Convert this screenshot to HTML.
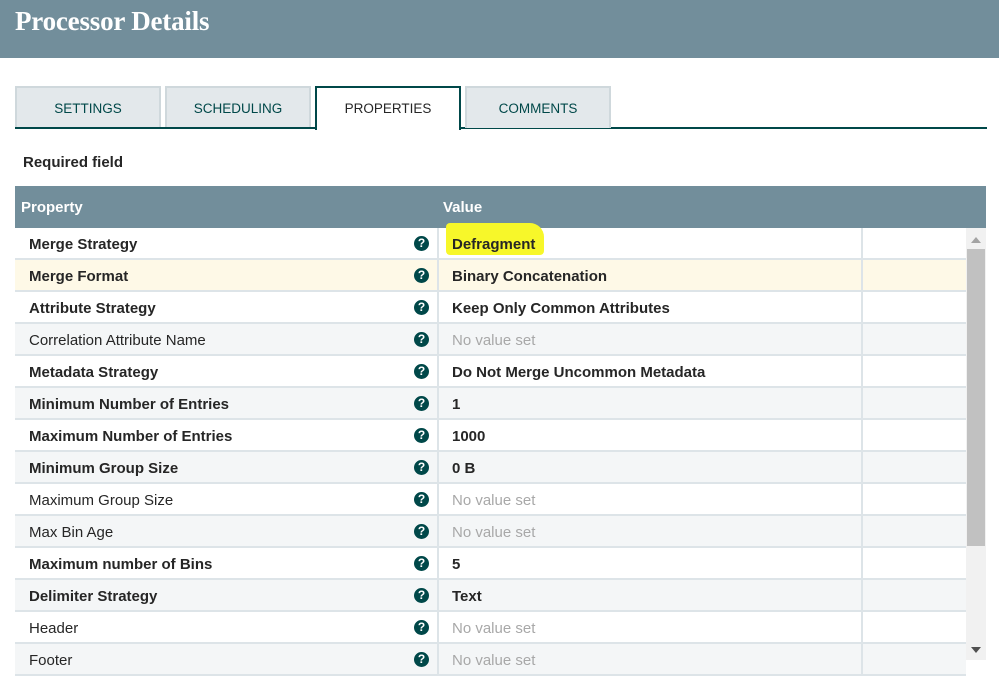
<!DOCTYPE html>
<html><head><style>
*{margin:0;padding:0;box-sizing:border-box}
body{width:999px;height:660px;overflow:hidden;background:#fff;font-family:"Liberation Sans",sans-serif;position:relative}
.hdr{position:absolute;left:0;top:0;width:999px;height:58px;background:#728e9b}
.hdr h1{position:absolute;left:15px;top:6px;color:#fff;font-family:"Liberation Serif",serif;font-size:27px;font-weight:bold;letter-spacing:-0.2px}
.tab{position:absolute;top:86px;height:42px;width:146px;background:#e3e8eb;border:2px solid #cfd8dc;border-bottom:none;color:#004849;font-size:13.5px;text-align:center;line-height:42px}
.tab.act{background:#fff;border:2px solid #004849;border-bottom:none;color:#262626;height:44px}
.line{position:absolute;left:15px;top:127px;width:972px;height:2px;background:#004849}
.req{position:absolute;left:23px;top:154px;font-size:15px;font-weight:bold;color:#262626}
.th{position:absolute;left:15px;top:186px;width:971px;height:42px;background:#728e9b;color:#fff;font-weight:bold;font-size:15px}
.th span{position:absolute;top:13px}
.rows{position:absolute;left:15px;top:228px;width:951px}
.r{height:32px;border-bottom:2px solid #dde4e8;position:relative;font-size:15px;color:#262626}
.r.g{background:#f4f6f7}.r.y{background:#fef9e7}
.r .n{position:absolute;left:14px;top:8px}
.r .b{font-weight:bold}
.r .v{position:absolute;left:437px;top:8px;font-weight:bold}
.r .v.e{font-weight:normal;color:#a8a8a8}
.r .q{position:absolute;left:399px;top:8px;width:15px;height:15px;border-radius:50%;background:#004849;color:#fff;font-size:12px;font-weight:bold;text-align:center;line-height:15px}
.r:before{content:"";position:absolute;left:422px;top:0;width:2px;height:32px;background:#dde4e8}
.r:after{content:"";position:absolute;left:846px;top:0;width:2px;height:32px;background:#dde4e8}
.sb{position:absolute;left:966px;top:228px;width:20px;height:432px;background:#f1f1f1}
.th2{position:absolute;left:967px;top:249px;width:18px;height:297px;background:#c1c1c1}
.hl{position:absolute;width:98px;height:32px;background:#f7f72a;border-radius:4px 14px 4px 4px}
</style></head><body>
<div class="hdr"><h1>Processor Details</h1></div>
<div class="tab" style="left:15px">SETTINGS</div>
<div class="tab" style="left:165px">SCHEDULING</div>
<div class="line"></div>
<div class="tab act" style="left:315px">PROPERTIES</div>
<div class="tab" style="left:465px">COMMENTS</div>
<div class="req">Required field</div>
<div class="th"><span style="left:6px">Property</span><span style="left:428px">Value</span></div>
<div class="rows">
<div class="r"><div class="hl" style="left:431px;top:-5px"></div><span class="n b">Merge Strategy</span><span class="q">?</span><span class="v" style="position:absolute">Defragment</span></div>
<div class="r y"><span class="n b">Merge Format</span><span class="q">?</span><span class="v">Binary Concatenation</span></div>
<div class="r"><span class="n b">Attribute Strategy</span><span class="q">?</span><span class="v">Keep Only Common Attributes</span></div>
<div class="r g"><span class="n">Correlation Attribute Name</span><span class="q">?</span><span class="v e">No value set</span></div>
<div class="r"><span class="n b">Metadata Strategy</span><span class="q">?</span><span class="v">Do Not Merge Uncommon Metadata</span></div>
<div class="r g"><span class="n b">Minimum Number of Entries</span><span class="q">?</span><span class="v">1</span></div>
<div class="r"><span class="n b">Maximum Number of Entries</span><span class="q">?</span><span class="v">1000</span></div>
<div class="r g"><span class="n b">Minimum Group Size</span><span class="q">?</span><span class="v">0 B</span></div>
<div class="r"><span class="n">Maximum Group Size</span><span class="q">?</span><span class="v e">No value set</span></div>
<div class="r g"><span class="n">Max Bin Age</span><span class="q">?</span><span class="v e">No value set</span></div>
<div class="r"><span class="n b">Maximum number of Bins</span><span class="q">?</span><span class="v">5</span></div>
<div class="r g"><span class="n b">Delimiter Strategy</span><span class="q">?</span><span class="v">Text</span></div>
<div class="r"><span class="n">Header</span><span class="q">?</span><span class="v e">No value set</span></div>
<div class="r g"><span class="n">Footer</span><span class="q">?</span><span class="v e">No value set</span></div>
</div>
<div class="sb"></div><div class="th2"></div>
<div style="position:absolute;left:971px;top:237px;width:0;height:0;border-left:5px solid transparent;border-right:5px solid transparent;border-bottom:6px solid #a3a3a3"></div>
<div style="position:absolute;left:971px;top:647px;width:0;height:0;border-left:5px solid transparent;border-right:5px solid transparent;border-top:6px solid #505050"></div>
</body></html>
